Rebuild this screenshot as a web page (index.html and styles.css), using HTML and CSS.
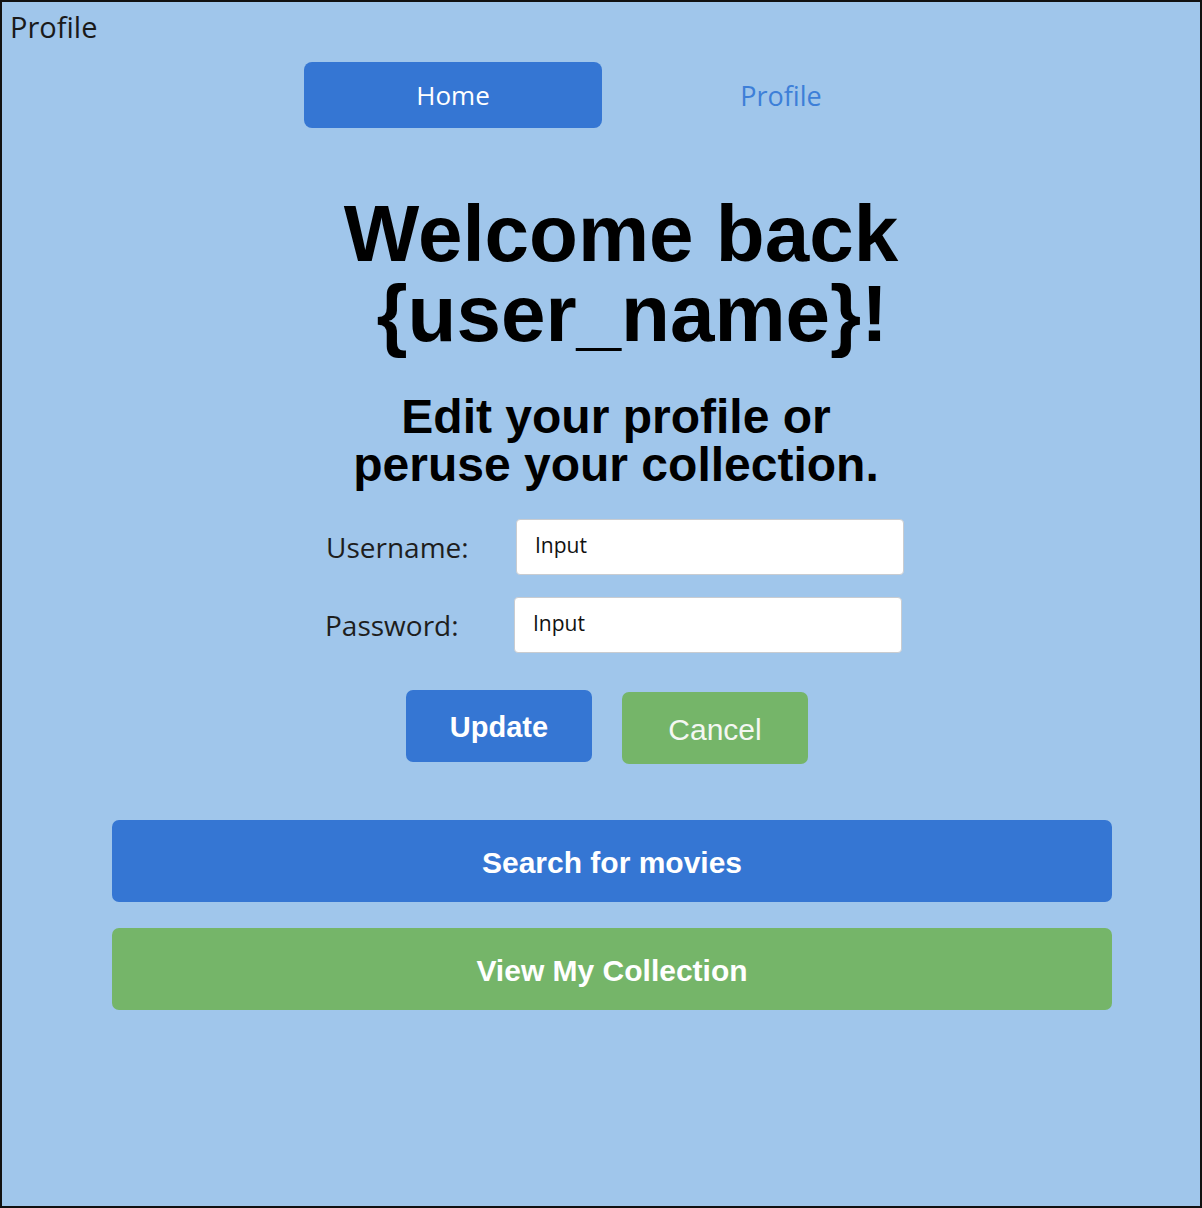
FILE: index.html
```html
<!DOCTYPE html>
<html lang="en">
<head>
<meta charset="utf-8">
<title>Profile</title>
<link rel="stylesheet" href="styles.css">
</head>
<body>
<div class="frame">
  <div class="title">Profile</div>
  <div class="content">
    <nav class="nav">
      <a class="nav-item nav-active" href="#">Home</a>
      <a class="nav-item nav-link" href="#">Profile</a>
    </nav>
    <h1 class="welcome">Welcome back<br>&nbsp;{user_name}!</h1>
    <h2 class="subtitle">Edit your profile or<br>peruse your collection.</h2>
    <form class="form">
      <label class="label" for="username">Username:</label>
      <input class="input" id="username" type="text" value="Input">
      <label class="label label-pw" for="password">Password:</label>
      <input class="input input-pw" id="password" type="text" value="Input">
    </form>
    <div class="actions">
      <button class="btn btn-update" type="button">Update</button>
      <button class="btn btn-cancel" type="button">Cancel</button>
    </div>
    <button class="wide wide-blue" type="button">Search for movies</button>
    <button class="wide wide-green" type="button">View My Collection</button>
  </div>
</div>
</body>
</html>
```
FILE: styles.css
```css
* { box-sizing: border-box; }
html, body { margin: 0; padding: 0; }
body { background: #a0c6eb; }

.frame {
  width: 1202px;
  height: 1208px;
  border: 2px solid #111;
  background: #a0c6eb;
  font-family: "Open Sans", "Liberation Sans", sans-serif;
}

.title {
  margin: 7px 0 0 8px;
  font-size: 29px;
  line-height: 36px;
  color: #1a1a1a;
}

.content {
  display: flex;
  flex-direction: column;
  align-items: center;
  padding-left: 22px;
}

.nav {
  margin-top: 17px;
  margin-left: 10px;
  display: grid;
  grid-template-columns: 298px 298px;
  column-gap: 30px;
}
.nav-item {
  height: 66px;
  display: flex;
  align-items: center;
  justify-content: center;
  text-decoration: none;
  font-size: 26px;
}
.nav-active {
  background: #3576d3;
  color: #fff;
  border-radius: 8px;
}
.nav-link {
  color: #3d7fd8;
  font-size: 27px;
}

.welcome {
  margin: 66px 0 0 18px;
  font-family: "Liberation Sans", Arial, sans-serif;
  font-weight: bold;
  font-size: 80px;
  line-height: 80px;
  text-align: center;
  color: #000;
}

.subtitle {
  margin: 39px 0 0 8px;
  font-family: "Liberation Sans", Arial, sans-serif;
  font-weight: bold;
  font-size: 48px;
  line-height: 48px;
  text-align: center;
  color: #000;
}

.form {
  margin: 30px 0 0 6px;
  display: grid;
  grid-template-columns: 190px 388px;
  row-gap: 22px;
  align-items: center;
}
.label {
  font-size: 28px;
  color: #1e1e1e;
}
.label-pw { margin-left: -1px; }
.input {
  height: 56px;
  width: 388px;
  background: #fff;
  border: 1px solid #c9ccd0;
  border-radius: 4px;
  padding: 0 0 4px 18px;
  font-family: "Open Sans", sans-serif;
  font-size: 21px;
  color: #111;
  outline: none;
}
.input-pw { margin-left: -2px; }

.actions {
  margin: 37px 10px 0 0;
  display: flex;
  gap: 30px;
  align-items: flex-start;
}
.btn {
  width: 186px;
  height: 72px;
  border: none;
  border-radius: 7px;
  color: #fff;
  font-family: "Liberation Sans", Arial, sans-serif;
  font-size: 29px;
  padding-top: 4px;
  cursor: pointer;
}
.btn-update {
  background: #3576d3;
  font-weight: bold;
}
.btn-cancel {
  background: #75b569;
  margin-top: 2px;
  color: #f4f7f2;
  font-size: 30px;
}

.wide {
  width: 1000px;
  height: 82px;
  border: none;
  border-radius: 7px;
  color: #fff;
  font-family: "Liberation Sans", Arial, sans-serif;
  font-weight: bold;
  font-size: 30px;
  padding-top: 4px;
  cursor: pointer;
}
.wide-blue {
  margin-top: 56px;
  background: #3576d3;
}
.wide-green {
  margin-top: 26px;
  background: #75b569;
}
```
